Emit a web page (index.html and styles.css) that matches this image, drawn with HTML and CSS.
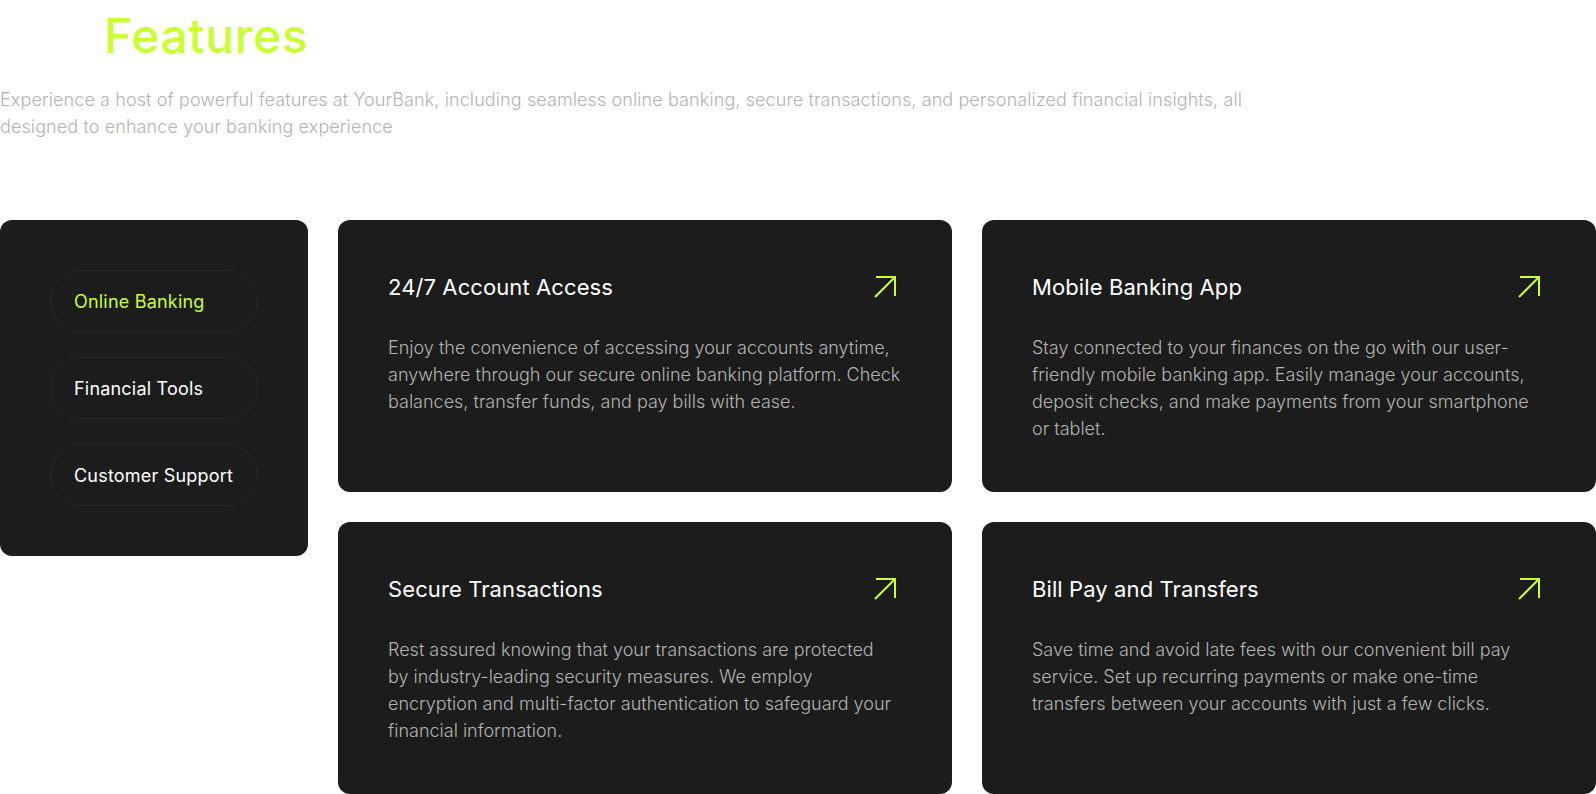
FILE: index.html
```html
<!DOCTYPE html>
<html lang="en">
<head>
<meta charset="utf-8">
<title>Features</title>
<link rel="stylesheet" href="styles.css">
</head>
<body>
<section class="features">
  <header class="features-head">
    <h2 class="features-title">Features</h2>
    <p class="features-sub">Experience a host of powerful features at YourBank, including seamless online banking, secure transactions, and personalized financial insights, all designed to enhance your banking experience</p>
  </header>
  <div class="features-body">
    <nav class="tabs">
      <button class="tab is-active">Online Banking</button>
      <button class="tab">Financial Tools</button>
      <button class="tab">Customer Support</button>
    </nav>
    <div class="cards">
      <article class="card">
        <div class="card-head">
          <h3 class="card-title">24/7 Account Access</h3>
          <svg class="card-icon" viewBox="0 0 34 34" width="34" height="34" aria-hidden="true"><path d="M7 27 L27 7 M8 7 H27 V26" fill="none" stroke="#CAFF33" stroke-width="2"/></svg>
        </div>
        <p class="card-text">Enjoy the convenience of accessing your accounts anytime, anywhere through our secure online banking platform. Check balances, transfer funds, and pay bills with ease.</p>
      </article>
      <article class="card">
        <div class="card-head">
          <h3 class="card-title">Mobile Banking App</h3>
          <svg class="card-icon" viewBox="0 0 34 34" width="34" height="34" aria-hidden="true"><path d="M7 27 L27 7 M8 7 H27 V26" fill="none" stroke="#CAFF33" stroke-width="2"/></svg>
        </div>
        <p class="card-text">Stay connected to your finances on the go with our user-friendly mobile banking app. Easily manage your accounts, deposit checks, and make payments from your smartphone or tablet.</p>
      </article>
      <article class="card">
        <div class="card-head">
          <h3 class="card-title">Secure Transactions</h3>
          <svg class="card-icon" viewBox="0 0 34 34" width="34" height="34" aria-hidden="true"><path d="M7 27 L27 7 M8 7 H27 V26" fill="none" stroke="#CAFF33" stroke-width="2"/></svg>
        </div>
        <p class="card-text">Rest assured knowing that your transactions are protected<br>by industry-leading security measures. We employ encryption and multi-factor authentication to safeguard your financial information.</p>
      </article>
      <article class="card">
        <div class="card-head">
          <h3 class="card-title">Bill Pay and Transfers</h3>
          <svg class="card-icon" viewBox="0 0 34 34" width="34" height="34" aria-hidden="true"><path d="M7 27 L27 7 M8 7 H27 V26" fill="none" stroke="#CAFF33" stroke-width="2"/></svg>
        </div>
        <p class="card-text">Save time and avoid late fees with our convenient bill pay service. Set up recurring payments or make one-time transfers between your accounts with just a few clicks.</p>
      </article>
    </div>
  </div>
</section>
</body>
</html>
```
FILE: styles.css
```css
* { box-sizing: border-box; }

html, body {
  margin: 0;
  padding: 0;
  background: #ffffff;
}

body {
  font-family: "Inter", "Liberation Sans", sans-serif;
  color: #ffffff;
}

.features {
  width: 1596px;
}

.features-head {
  display: flex;
  flex-direction: column;
}

.features-title {
  margin: 0 0 0 104px;
  font-size: 48px;
  line-height: 72px;
  font-weight: 500;
  letter-spacing: 0.6px;
  color: #CAFF33;
}

.features-sub {
  margin: 14px 0 0;
  max-width: 1280px;
  font-size: 18px;
  line-height: 27px;
  font-weight: 300;
  letter-spacing: 0.1px;
  color: #B3B3B3;
}

.features-body {
  display: grid;
  grid-template-columns: 308px 1fr;
  gap: 30px;
  margin-top: 80px;
  align-items: start;
}

.tabs {
  display: flex;
  flex-direction: column;
  gap: 25px;
  padding: 50px;
  background: #1C1C1C;
  border-radius: 12px;
}

.tab {
  display: flex;
  align-items: center;
  height: 62px;
  padding: 0 23px;
  background: #1C1C1C;
  border: 1px solid #262626;
  border-radius: 100px;
  font-family: inherit;
  font-size: 18px;
  line-height: 27px;
  font-weight: 400;
  letter-spacing: 0.2px;
  color: #ffffff;
  text-align: left;
  cursor: pointer;
}

.tab.is-active {
  color: #CAFF33;
}

.cards {
  display: grid;
  grid-template-columns: 1fr 1fr;
  gap: 30px;
}

.card {
  padding: 50px;
  background: #1C1C1C;
  border-radius: 12px;
}

.card-head {
  display: flex;
  align-items: center;
  justify-content: space-between;
  height: 34px;
}

.card-title {
  margin: 0;
  font-size: 22px;
  line-height: 33px;
  font-weight: 400;
  letter-spacing: 0.1px;
  color: #ffffff;
}

.card-icon {
  display: block;
  flex: none;
}

.card-text {
  margin: 30px 0 0;
  font-size: 18px;
  line-height: 27px;
  font-weight: 300;
  color: #B3B3B3;
}
```
